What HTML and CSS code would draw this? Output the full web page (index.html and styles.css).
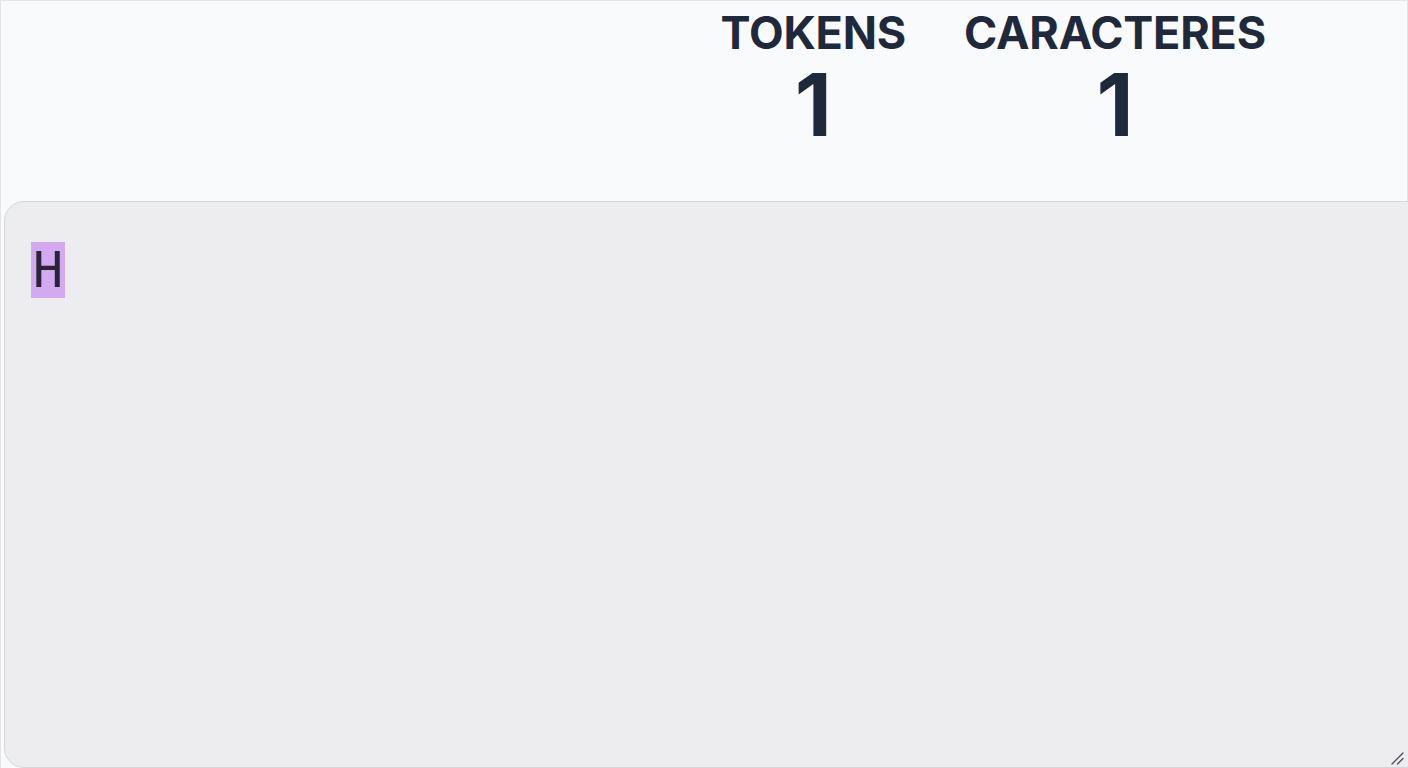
FILE: index.html
```html
<!DOCTYPE html>
<html lang="es">
<head>
<meta charset="utf-8">
<title>Contador de tokens</title>
<link rel="stylesheet" href="styles.css">
</head>
<body>
<div class="frame">
  <header class="stats">
    <div class="stat">
      <div class="stat-label">TOKENS</div>
      <div class="stat-value">1</div>
    </div>
    <div class="stat">
      <div class="stat-label">CARACTERES</div>
      <div class="stat-value">1</div>
    </div>
  </header>
  <main class="editor">
    <div class="editor-text"><span class="token">H</span></div>
    <svg class="grip" width="14" height="14" viewBox="0 0 14 14" aria-hidden="true">
      <line x1="2" y1="13" x2="13" y2="2" stroke="#4b4b55" stroke-width="1.3" stroke-linecap="round"/>
      <line x1="7.5" y1="13" x2="13" y2="7.5" stroke="#4b4b55" stroke-width="1.3" stroke-linecap="round"/>
    </svg>
  </main>
</div>
</body>
</html>
```
FILE: styles.css
```css
html, body {
  margin: 0;
  padding: 0;
  height: 100%;
  overflow: hidden;
}
body {
  background: #f9fafb;
  font-family: Inter, "Noto Sans", sans-serif;
  color: #1e293b;
}
.frame {
  box-sizing: border-box;
  height: 768px;
  border: 1px solid #e2e4e8;
  border-bottom: none;
  display: flex;
  flex-direction: column;
  background: #f9fafb;
}
.stats {
  height: 200px;
  flex: none;
  display: flex;
  justify-content: flex-end;
  gap: 58px;
  padding-right: 141px;
}
.stat {
  display: flex;
  flex-direction: column;
  align-items: center;
}
.stat-label {
  font-size: 45px;
  font-weight: 700;
  line-height: 64px;
  letter-spacing: -0.2px;
}
.stat-value {
  font-size: 86px;
  font-weight: 700;
  line-height: 80px;
}
.editor {
  flex: 1;
  position: relative;
  margin-left: 3px;
  margin-right: -4px;
  border: 1px solid #d4d6dc;
  border-radius: 20px 0 0 20px;
  background: #ededf0;
  padding: 40px 26px;
}
.editor-text {
  font-family: "DejaVu Sans Mono", "Liberation Mono", monospace;
  font-size: 50px;
  line-height: 56px;
  color: #2a2438;
}
.token {
  background: #d3a9f2;
  display: inline-block;
  padding: 0 2px;
}
.grip {
  position: absolute;
  right: 6px;
  bottom: 2px;
}
```
